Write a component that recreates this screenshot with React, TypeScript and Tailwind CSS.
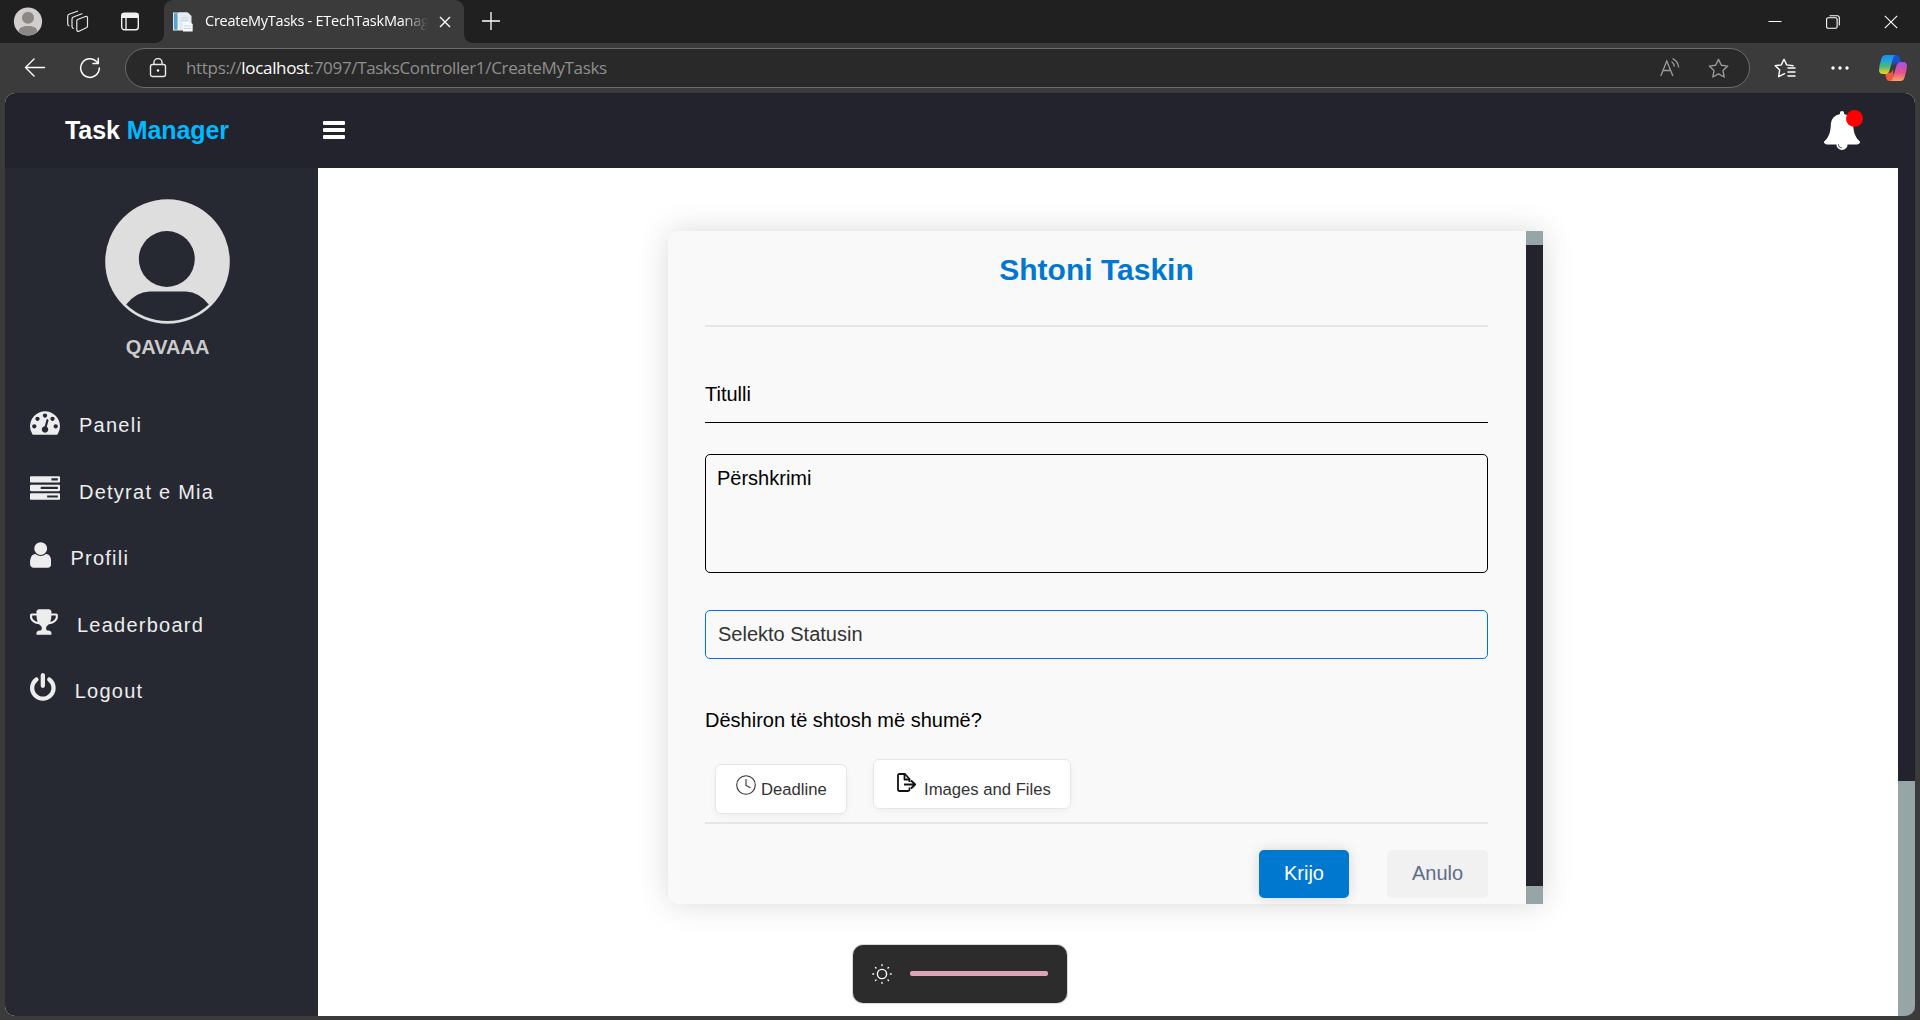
import React from "react";

const ARIAL = "font-['Liberation_Sans',Arial,sans-serif]";

const PATHS = {
  gauge:
    "M384 1152q0-53-37.5-90.5t-90.5-37.5-90.5 37.5-37.5 90.5 37.5 90.5 90.5 37.5 90.5-37.5 37.5-90.5zm192-448q0-53-37.5-90.5t-90.5-37.5-90.5 37.5-37.5 90.5 37.5 90.5 90.5 37.5 90.5-37.5 37.5-90.5zm428 481l101-382q6-26-7.5-48.5t-38.5-29.5-48 6.5-30 39.5l-101 382q-60 5-107 43.5t-63 98.5q-20 77 20 146t117 89 146-20 89-117q16-60-6-117t-72-91zm660-33q0-53-37.5-90.5t-90.5-37.5-90.5 37.5-37.5 90.5 37.5 90.5 90.5 37.5 90.5-37.5 37.5-90.5zm-640-640q0-53-37.5-90.5t-90.5-37.5-90.5 37.5-37.5 90.5 37.5 90.5 90.5 37.5 90.5-37.5 37.5-90.5zm448 192q0-53-37.5-90.5t-90.5-37.5-90.5 37.5-37.5 90.5 37.5 90.5 90.5 37.5 90.5-37.5 37.5-90.5zm320 448q0 261-141 483-19 29-54 29h-1402q-35 0-54-29-141-221-141-483 0-182 71-348t191-286 286-191 348-71 348 71 286 191 191 286 71 348z",
  tasks:
    "M1024 1408h640v-128h-640v128zm-384-512h1024v-128h-1024v128zm640-512h384v-128h-384v128zm512 832v256q0 26-19 45t-45 19h-1664q-26 0-45-19t-19-45v-256q0-26 19-45t45-19h1664q26 0 45 19t19 45zm0-512v256q0 26-19 45t-45 19h-1664q-26 0-45-19t-19-45v-256q0-26 19-45t45-19h1664q26 0 45 19t19 45zm0-512v256q0 26-19 45t-45 19h-1664q-26 0-45-19t-19-45v-256q0-26 19-45t45-19h1664q26 0 45 19t19 45z",
  user: "M1536 1399q0 109-62.5 187t-150.5 78h-854q-88 0-150.5-78t-62.5-187q0-85 8.5-160.5t31.5-152 58.5-131 94-89 134.5-34.5q131 128 313 128t313-128q76 0 134.5 34.5t94 89 58.5 131 31.5 152 8.5 160.5zm-256-887q0 159-112.5 271.5t-271.5 112.5-271.5-112.5-112.5-271.5 112.5-271.5 271.5-112.5 271.5 112.5 112.5 271.5z",
  trophy:
    "M522 883q-74-162-74-371h-256v96q0 78 94.5 162t235.5 113zm1078-275v-96h-256q0 209-74 371 141-29 235.5-113t94.5-162zm128-128v128q0 71-41.5 143t-112 130-173 97.5-215.5 44.5q-42 54-95 95-38 34-52.5 72.5t-14.5 89.5q0 54 30.5 91t97.5 37q75 0 133.5 45.5t58.5 114.5v64q0 14-9 23t-23 9h-832q-14 0-23-9t-9-23v-64q0-69 58.5-114.5t133.5-45.5q67 0 97.5-37t30.5-91q0-51-14.5-89.5t-52.5-72.5q-53-41-95-95-113-5-215.5-44.5t-173-97.5-112-130-41.5-143v-128q0-40 28-68t68-28h288v-96q0-66 47-113t113-47h576q66 0 113 47t47 113v96h288q40 0 68 28t28 68z",
  power:
    "M1664 896q0 156-61 298t-164 245-245 164-298 61-298-61-245-164-164-245-61-298q0-182 80.5-343t226.5-270q43-32 95.5-25t83.5 50q32 42 24.5 94.5t-49.5 84.5q-98 74-151.5 181t-53.5 228q0 104 40.5 198.5t109.5 163.5 163.5 109.5 198.5 40.5 198.5-40.5 163.5-109.5 109.5-163.5 40.5-198.5q0-121-53.5-228t-151.5-181q-42-32-49.5-84.5t24.5-94.5q31-43 84-50t95 25q146 109 226.5 270t80.5 343zm-640-768v640q0 52-38 90t-90 38-90-38-38-90v-640q0-52 38-90t90-38 90 38 38 90z",
  bell: "M912 1696q0-16-16-16-59 0-101.5-42.5t-42.5-101.5q0-16-16-16t-16 16q0 73 51.5 124.5t124.5 51.5q16 0 16-16zm816-288q0 52-38 90t-90 38h-448q0 106-75 181t-181 75-181-75-75-181h-448q-52 0-90-38t-38-90q50-42 91-88t85-119.5 74.5-158.5 50-206 19.5-260q0-152 117-282.5t307-158.5q-8-19-8-39 0-40 28-68t68-28 68 28 28 68q0 20-8 39 190 28 307 158.5t117 282.5q0 139 19.5 260t50 206 74.5 158.5 85 119.5 91 88z",
};

const NAV = [
  { label: "Paneli", path: PATHS.gauge, x: 0, w: 1792, width: 30 },
  { label: "Detyrat e Mia", path: PATHS.tasks, x: 0, w: 1792, width: 30 },
  { label: "Profili", path: PATHS.user, x: 256, w: 1280, width: 21.4 },
  { label: "Leaderboard", path: PATHS.trophy, x: 64, w: 1664, width: 27.9 },
  { label: "Logout", path: PATHS.power, x: 128, w: 1536, width: 25.7 },
];

function TabStrip() {
  return (
    <div className="flex h-[43px] items-center bg-[#202020] text-white">
      <svg className="ml-[13px] h-[30px] w-[30px]" viewBox="0 0 30 30">
        <circle cx="15" cy="14.500" r="14.100" fill="#d1cfcc" />
        <circle cx="15" cy="10.800" r="6" fill="#8b8886" />
        <path d="M5.500 24.700C6 20.500 9.500 19 15 19S24 20.500 24.500 24.700A14 14 0 0 1 5.500 24.700Z" fill="#8b8886" />
      </svg>
      <svg className="ml-[22px] h-6 w-6" viewBox="0 0 24 24" fill="none" stroke="#e6e6e6" strokeWidth="1.200" strokeLinejoin="round" strokeLinecap="round">
        <path d="M12.500 9.500 20.500 6.500q2-.6 2 1.400v8q0 1.400-1.200 1.900l-7.300 3.400q-2.200.8-2.200-1.400V11.500q0-1.500.7-2Z" />
        <path d="M8.300 18.500q-1.300-.4-1.300-1.900V9.200q0-1.600 1.300-2.200L17 3.800" />
        <path d="M4 15.800q-1.300-.4-1.300-1.900V6.300q0-1.600 1.300-2.100L12.500 1.200" />
      </svg>
      <svg className="ml-[31px] h-5 w-5" viewBox="0 0 20 20" fill="none" stroke="#f0f0f0" strokeWidth="1.400">
        <rect x="1.700" y="1.200" width="16.600" height="16.600" rx="2.800" />
        <path d="M2.300 2h15.400v3.300H2.300Z" fill="#f0f0f0" />
        <path d="M6 5.500v12" />
      </svg>
      <div className="relative ml-[24px] flex h-[43px] w-[300px] items-center rounded-t-[9px] bg-[#3b3b3b]">
        <div className="absolute bottom-0 -left-[8px] h-2 w-2 bg-[radial-gradient(circle_at_0_0,#202020_7.5px,#3b3b3b_8px)]" />
        <div className="absolute -right-[8px] bottom-0 h-2 w-2 bg-[radial-gradient(circle_at_100%_0,#202020_7.5px,#3b3b3b_8px)]" />
        <svg className="ml-[9px] h-5 w-5" viewBox="0 0 20 20">
          <path d="M0 .5h14v18H0z" fill="#f2f7fb" />
          <path d="M.8 1.200h3.800v16.500H.8z" fill="#55a5d5" />
          <path d="M6 .5h9l3.500 3.500v14H6z" fill="#e3ecf3" />
          <path d="M8 6h7M8 8.500h7" stroke="#c5d6e3" />
          <path d="M10 10h7l2.700 2v7.500H10z" fill="#f7fafc" />
          <path d="M11 14h7M11 16.500h7" stroke="#cbd5de" />
        </svg>
        <div className="-mt-[2px] ml-[12px] w-[223px] whitespace-nowrap font-['Open_Sans','Noto_Sans',sans-serif] text-[14.5px] tracking-[-0.25px] [mask-image:linear-gradient(90deg,#000_88%,transparent)]">
          CreateMyTasks - ETechTaskManag
        </div>
        <svg className="ml-[11px] h-3 w-3" viewBox="0 0 12 12" stroke="#fff" strokeWidth="1.400">
          <path d="M1 1l10 10M11 1 1 11" />
        </svg>
      </div>
      <svg className="mb-[2px] ml-[18px] h-[18px] w-[18px]" viewBox="0 0 18 18" stroke="#fff" strokeWidth="1.300">
        <path d="M9 0v18M0 9h18" />
      </svg>
      <div className="ml-auto mr-[22px] flex items-center gap-[44px]">
        <svg className="h-[14px] w-[14px]" viewBox="0 0 14 14" stroke="#fff" strokeWidth="1">
          <path d="M.5 6.500h13" />
        </svg>
        <svg className="h-[14px] w-[14px]" viewBox="0 0 14 14" fill="none" stroke="#fff" strokeWidth="1.100">
          <rect x=".6" y="2.800" width="10.500" height="10.500" rx="1.500" />
          <path d="M3.500.7h7.800q2 0 2 2v7.800" />
        </svg>
        <svg className="h-[14px] w-[14px]" viewBox="0 0 14 14" stroke="#fff" strokeWidth="1.100">
          <path d="M.8.8l12.400 12.400M13.200.8.8 13.200" />
        </svg>
      </div>
    </div>
  );
}

const STAR = "M10 1.300l2.700 5.600 6.100.8-4.500 4.300 1.100 6.100L10 15.200l-5.400 2.900 1.100-6.100L1.200 7.700l6.100-.8z";

function Toolbar() {
  return (
    <div className="flex h-[50px] items-center bg-[#3b3b3b]">
      <svg className="ml-[24px] h-[22px] w-[22px]" viewBox="0 0 22 22" fill="none" stroke="#fff" strokeWidth="1.400" strokeLinecap="round" strokeLinejoin="round">
        <path d="M20.500 10.500H1.500M10 2 1.500 10.500l8.500 8.500" />
      </svg>
      <svg className="ml-[33px] h-[22px] w-[22px]" viewBox="0 0 22 22" fill="none" stroke="#fff" strokeWidth="1.500" strokeLinecap="round" strokeLinejoin="round">
        <path d="M20.300 11a9.300 9.300 0 1 1-2.700-6.500L19 6.300" />
        <path d="M19.300 1.200v5.300H14" />
      </svg>
      <div className="ml-[24px] flex h-10 w-[1625px] items-center rounded-full border border-[#6c6c6c] bg-[#292929]">
        <svg className="ml-[23px] h-5 w-[18px]" viewBox="0 0 18 20" fill="none" stroke="#e8e8e8" strokeWidth="1.400">
          <rect x="1.500" y="6.500" width="15" height="12" rx="2" />
          <path d="M5 6.500V4.500a4 4 0 0 1 8 0v2" />
          <circle cx="9" cy="12.500" r="1.200" fill="#fff" stroke="none" />
        </svg>
        <div className="ml-[19px] whitespace-nowrap font-['Open_Sans','Noto_Sans',sans-serif] text-[17px] tracking-[-0.33px] text-[#8f8f8f]">
          https://<span className="text-white">localhost</span>:7097/TasksController1/CreateMyTasks
        </div>
        <svg className="ml-auto h-5 w-5" viewBox="0 0 20 20" fill="none" stroke="#9b9b9b" strokeWidth="1.300" strokeLinecap="round">
          <path d="M1 17.500 6.800 3 12.700 17.500M3 12.500h7.700" />
          <path d="M12 4q2 1.500 2.200 4.200M13 .8q4.800 2.200 5.600 8.200" />
        </svg>
        <svg className="mr-[20px] ml-[28px] h-[21px] w-[21px]" viewBox="0 0 20 20" fill="none" stroke="#9b9b9b" strokeWidth="1.300" strokeLinejoin="round">
          <path d={STAR} />
        </svg>
      </div>
      <svg className="ml-[24px] h-[21px] w-[22px]" viewBox="0 0 22 21" fill="none" stroke="#fff" strokeWidth="1.400" strokeLinejoin="round" strokeLinecap="round">
        <path d="M19 7.800 12.700 6.900 10 1.300 7.300 6.900l-6.100.8 4.500 4.300-1.100 6.700 6-3" />
        <path d="M14 10H21M14 14H21M14 18H21" />
      </svg>
      <svg className="ml-[35px] h-1 w-[18px]" viewBox="0 0 18 4" fill="#fff">
        <circle cx="2" cy="2" r="1.700" />
        <circle cx="9" cy="2" r="1.700" />
        <circle cx="16" cy="2" r="1.700" />
      </svg>
      <svg className="ml-[30px] h-[26px] w-7" viewBox="0 0 28 26">
        <defs>
          <linearGradient id="cpA" x1="0" y1="0" x2="0" y2="1">
            <stop offset="0" stopColor="#1a8cf0" />
            <stop offset=".3" stopColor="#21a5d8" />
            <stop offset=".6" stopColor="#4cb77a" />
            <stop offset="1" stopColor="#f2d51d" />
          </linearGradient>
          <linearGradient id="cpB" x1="0" y1="0" x2="0" y2="1">
            <stop offset="0" stopColor="#a450ee" />
            <stop offset=".55" stopColor="#e7508f" />
            <stop offset="1" stopColor="#fca45d" />
          </linearGradient>
        </defs>
        <path d="M13 0h5q2 0 2.700 2.500L22 8h-4q-3 0-4 4z" fill="#1b4fd0" />
        <path d="M15 26h-5q-2 0-2.700-2.500L6 18h4q3 0 4-4z" fill="#ef5a3c" />
        <path d="M6.500 0H17q-2 0-3 3.500l-3.500 12Q9.500 19 6 19H4q-4 0-4-4 .3-5 2.500-11.500Q3.500 0 6.500 0Z" fill="url(#cpA)" />
        <path d="M21.500 26H11q2 0 3-3.500l3.500-12Q18.500 7 22 7h2q4 0 4 4-.3 5-2.500 11.500-1 3.500-4 3.500Z" fill="url(#cpB)" />
      </svg>
    </div>
  );
}

function Header() {
  return (
    <header className="flex h-[75px] items-center bg-[#23232d]">
      <h1 className="ml-[60px] w-[258px] whitespace-nowrap text-[25px] font-bold leading-[75px] tracking-[-0.08px] text-white">
        Task <span className="text-[#00b9ff]">Manager</span>
      </h1>
      <div className="mb-[2px] flex w-[22px] flex-col gap-[3px]">
        <div className="h-1 rounded-[1px] bg-white" />
        <div className="h-1 rounded-[1px] bg-white" />
        <div className="h-1 rounded-[1px] bg-white" />
      </div>
      <div className="relative ml-auto mr-[53px]">
        <svg className="h-[39px] w-10" viewBox="0 0 1792 1792" fill="#fff">
          <path d={PATHS.bell} />
        </svg>
        <div className="absolute -top-[1px] left-[24px] h-[17px] w-[17px] rounded-full bg-[#ff0000]" />
      </div>
    </header>
  );
}

function Sidebar() {
  return (
    <aside className="w-[313px] shrink-0 bg-[#272932]">
      <div className="flex flex-col items-center pl-[12px] pt-[31px]">
        <svg className="h-[125px] w-[125px]" viewBox="0 0 125 125">
          <circle cx="62.500" cy="62.500" r="62.300" fill="#dedede" />
          <circle cx="61.800" cy="60" r="28" fill="#272932" />
          <path d="M21.200 105.500Q31 93 44.500 92.500H81Q94 93 103.800 105.500A60 60 0 0 1 21.200 105.500Z" fill="#272932" />
        </svg>
        <div className="mt-[11px] text-[20px] font-bold leading-6 text-[#ccc]">QAVAAA</div>
      </div>
      <nav className="mt-[48px] flex flex-col pl-[25px]">
        {NAV.map((n) => (
          <div key={n.label} className="flex h-[66.5px] items-start">
            <svg height="30" width={n.width} viewBox={`${n.x} 0 ${n.w} 1792`} fill="#ededed" className="shrink-0">
              <path d={n.path} />
            </svg>
            <span className="ml-[19px] mt-[7px] whitespace-nowrap text-[20px] leading-[23px] tracking-[1.25px] text-[#ededed]">{n.label}</span>
          </div>
        ))}
      </nav>
    </aside>
  );
}

function TaskForm() {
  return (
    <div className="ml-[350px] mt-[63px] flex h-[673px] w-[875px] rounded-l-[10px] bg-[#f9f9f9] shadow-[0_0_32px_rgba(0,0,0,0.15)]">
      <form className="flex w-[858px] flex-col pl-[37px] pr-[38px]">
        <h2 className="mt-[21px] text-center text-[30px] font-bold leading-[36px] text-[#0078d0]">Shtoni Taskin</h2>
        <div className="mt-[37px] h-[2px] bg-[#e5e5ec]" />
        <div className="mt-[55px] h-[41px] border-b border-black text-[20px] leading-[24px] text-black">Titulli</div>
        <div className="mt-[31px] h-[119px] rounded-[5px] border border-black pl-[11px] pt-[11px] text-[20px] leading-[24px] text-black">
          Përshkrimi
        </div>
        <div className="mt-[37px] flex h-[49px] items-center rounded-[5px] border border-[#0078d0] pb-[2px] pl-[12px] text-[20px] text-[#333]">
          Selekto Statusin
        </div>
        <div className="mt-[49px] text-[20px] leading-[24px] text-black">Dëshiron të shtosh më shumë?</div>
        <div className="mt-[27px] flex h-[63px] items-start pl-[10px] text-[16.67px] text-[#333]">
          <div className="mt-[5px] flex h-[50px] w-[132px] rounded-[6px] border border-[#e6e6e9] bg-white pl-[20px] shadow-[0_3px_8px_rgba(0,0,0,0.04)]">
            <svg className="mt-[10px] h-5 w-5" viewBox="0 0 20 20" fill="none" stroke="#333" strokeWidth="1.100">
              <circle cx="10" cy="10" r="9.300" />
              <path d="M10 4v6.500l4.500 2.300" />
            </svg>
            <span className="ml-[5px] mt-[15px] leading-5">Deadline</span>
          </div>
          <div className="ml-[26px] flex h-[50px] w-[198px] rounded-[6px] border border-[#e6e6e9] bg-white pl-[22px] shadow-[0_3px_8px_rgba(0,0,0,0.04)]">
            <svg className="mt-[13px] h-5 w-5" viewBox="0 0 20 20" fill="none" stroke="#111" strokeWidth="1.800" strokeLinejoin="round">
              <path d="M13.500 14.500v2q0 1.500-1.500 1.500H3.500q-1.500 0-1.500-1.500v-14Q2 1 3.500 1H9l4.500 5v3" />
              <path d="M8.500 1v5.500h5M8 11.500h10.500M15 7.500l4.200 4-4.200 4" />
            </svg>
            <span className="ml-[8px] mt-[20px] whitespace-nowrap leading-5">Images and Files</span>
          </div>
        </div>
        <div className="h-[2px] bg-[#e5e5ec]" />
        <div className="mt-[26px] flex justify-end gap-[38px] text-[20px]">
          <button type="button" className="h-12 w-[90px] rounded-[5px] bg-[#0078d0] pb-[2px] text-white shadow-[0_0_14px_rgba(0,0,0,0.14)]">
            Krijo
          </button>
          <button type="button" className="h-12 w-[101px] rounded-[5px] bg-[#f1f1f1] pb-[2px] text-[#5f6b8a]">
            Anulo
          </button>
        </div>
      </form>
      <div className="flex w-[17px] flex-col bg-[#96a5a5]">
        <div className="mt-[14px] h-[641px] bg-[#23232d]" />
      </div>
    </div>
  );
}

function BrightnessOverlay() {
  return (
    <div className="absolute left-[853px] top-[945px] flex h-[58px] w-[214px] items-center rounded-[10px] bg-[#2c2c2c] shadow-[0_0_0_1px_rgba(0,0,0,0.15)]">
      <svg className="ml-[19px] h-5 w-5" viewBox="0 0 20 20" fill="none" stroke="#fff" strokeWidth="1.400" strokeLinecap="round">
        <circle cx="10" cy="10" r="4.600" />
        <path d="M10 .8v.8M10 18.400v.8M.8 10h.8M18.400 10h.8M3.500 3.500l.5.5M16 16l.5.5M3.500 16.500 4 16M16 4l.5-.5" />
      </svg>
      <div className="mb-[1px] ml-[18px] h-[5px] w-[138px] rounded-[2px] bg-[#dfa3b6]" />
    </div>
  );
}

export default function App() {
  return (
    <div className={`relative h-[1020px] w-[1920px] overflow-hidden bg-[#3b3b3b] ${ARIAL}`}>
      <TabStrip />
      <Toolbar />
      <div className="mx-[5px] h-[923px] overflow-hidden rounded-[10px] bg-white">
        <Header />
        <div className="flex h-[848px]">
          <Sidebar />
          <main className="w-[1580px] bg-white">
            <TaskForm />
          </main>
          <div className="flex w-[17px] flex-col justify-end bg-[#23232d]">
            <div className="h-[235px] bg-[#96a5a5]" />
          </div>
        </div>
      </div>
      <BrightnessOverlay />
    </div>
  );
}
